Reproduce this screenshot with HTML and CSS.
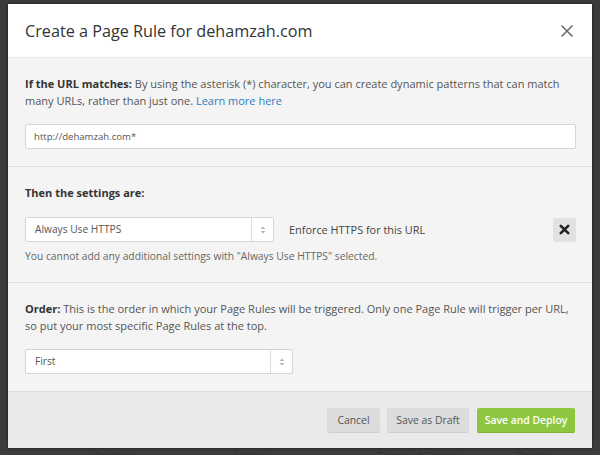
FILE: index.html
```html
<!DOCTYPE html>
<html>
<head>
<meta charset="utf-8">
<link rel="stylesheet" href="styles.css">
</head>
<body>
<div class="modal">
  <div class="modal-header">
    <h1 class="title">Create a Page Rule for dehamzah.com</h1>
    <svg class="close" width="14" height="14" viewBox="0 0 14 14"><path d="M1.5 1.5 L12.5 12.5 M12.5 1.5 L1.5 12.5" stroke="#666" stroke-width="1.5" fill="none"/></svg>
  </div>
  <div class="section">
    <p class="desc"><b>If the URL matches:</b> By using the asterisk (*) character, you can create dynamic patterns that can match many URLs, rather than just one. <a class="link">Learn more here</a></p>
    <div class="input">http://dehamzah.com*</div>
  </div>
  <div class="section">
    <p class="desc"><b>Then the settings are:</b></p>
    <div class="setting-row">
      <div class="select select-setting">
        <span class="select-text">Always Use HTTPS</span>
        <span class="arrows"><svg width="6" height="10" viewBox="0 0 6 10"><path d="M0.5 4 L3 1.5 L5.5 4 Z M0.5 6 L3 8.5 L5.5 6 Z" fill="#b5b5b5"/></svg></span>
      </div>
      <span class="setting-label">Enforce HTTPS for this URL</span>
      <span class="remove"><svg width="11" height="11" viewBox="0 0 11 11"><path d="M1.8 1.8 L9.2 9.2 M9.2 1.8 L1.8 9.2" stroke="#222" stroke-width="2.6" stroke-linecap="round"/></svg></span>
    </div>
    <p class="note">You cannot add any additional settings with "Always Use HTTPS" selected.</p>
  </div>
  <div class="section">
    <p class="desc"><b>Order:</b> This is the order in which your Page Rules will be triggered. Only one Page Rule will trigger per URL, so put your most specific Page Rules at the top.</p>
    <div class="select select-order">
      <span class="select-text">First</span>
      <span class="arrows"><svg width="6" height="10" viewBox="0 0 6 10"><path d="M0.5 4 L3 1.5 L5.5 4 Z M0.5 6 L3 8.5 L5.5 6 Z" fill="#b5b5b5"/></svg></span>
    </div>
  </div>
  <div class="modal-footer">
    <span class="btn btn-cancel">Cancel</span>
    <span class="btn btn-draft">Save as Draft</span>
    <span class="btn btn-primary">Save and Deploy</span>
  </div>
</div>
<div class="bg-links">
  <span>Partners</span><span>Videos</span><span>Terms of Service</span><span>Twitter</span>
</div>
</body>
</html>
```

FILE: styles.css
```css
html, body {
  margin: 0;
  padding: 0;
}
body {
  background: #3c3c3c;
  font-family: "Open Sans", "DejaVu Sans", sans-serif;
  color: #333;
  width: 600px;
  height: 455px;
  overflow: hidden;
}
.modal {
  margin: 4px 8px 0 8px;
  width: 584px;
  background: #f4f4f4;
  box-shadow: 0 0 3px rgba(0,0,0,0.6);
}
.modal-header {
  height: 54px;
  background: #fff;
  display: flex;
  align-items: center;
  justify-content: space-between;
  padding: 0 18px 0 17px;
  border-bottom: 1px solid #e6e6e6;
  box-sizing: border-box;
}
.title {
  margin: 0;
  font-size: 16.2px;
  font-weight: 400;
  color: #333;
}
.close {
  display: block;
}
.section {
  padding: 17px 16px 17px 17px;
  border-bottom: 1px solid #e0e0e0;
}
.desc {
  margin: 0;
  font-size: 11px;
  line-height: 17px;
  color: #555;
}
.desc b {
  color: #333;
  font-weight: 700;
}
.link {
  color: #2f7bbf;
}
.input {
  margin-top: 15px;
  height: 25px;
  box-sizing: border-box;
  background: #fff;
  border: 1px solid #d5d5d5;
  border-radius: 2px;
  padding-left: 8px;
  font-size: 9.6px;
  line-height: 23px;
  color: #555;
}
.setting-row {
  margin-top: 16px;
  display: flex;
  align-items: center;
}
.select {
  height: 25px;
  box-sizing: border-box;
  background: #fff;
  border: 1px solid #d5d5d5;
  border-radius: 2px;
  display: flex;
  align-items: stretch;
}
.select-text {
  flex: 1;
  padding-left: 9px;
  font-size: 10.2px;
  line-height: 23px;
  color: #555;
}
.arrows {
  width: 21px;
  border-left: 1px solid #ddd;
  display: flex;
  align-items: center;
  justify-content: center;
}
.select-setting {
  width: 249px;
}
.setting-label {
  margin-left: 15px;
  font-size: 10.9px;
  color: #444;
  flex: 1;
}
.remove {
  width: 23px;
  height: 24px;
  background: #e2e2e2;
  border-radius: 2px;
  display: flex;
  align-items: center;
  justify-content: center;
}
.note {
  margin: 6px 0 0 0;
  font-size: 10.3px;
  line-height: 17px;
  color: #666;
}
.select-order {
  margin-top: 15px;
  width: 268px;
}
.modal-footer {
  background: #eaeaea;
  height: 57px;
  display: flex;
  align-items: center;
  justify-content: flex-end;
  gap: 7px;
  padding-right: 17px;
  box-sizing: border-box;
  margin-top: -1px;
  border-top: 1px solid #dedede;
}
.btn {
  height: 25px;
  box-sizing: border-box;
  background: #dcdcdc;
  border-bottom: 1px solid #cfcfcf;
  border-radius: 2px;
  font-size: 10.4px;
  line-height: 25px;
  color: #555;
  text-align: center;
}
.btn-cancel {
  width: 53px;
}
.btn-draft {
  width: 82px;
}
.btn-primary {
  width: 98px;
  margin-left: 1px;
  background: #8dc63f;
  border-bottom-color: #7bb22f;
  color: #fff;
  font-weight: 600;
}
.bg-links {
  display: grid;
  grid-template-columns: 141px 141px 141px 80px;
  padding-left: 94px;
  margin-top: 1px;
  font-size: 11px;
  line-height: 14px;
  color: #26323f;
}
```
